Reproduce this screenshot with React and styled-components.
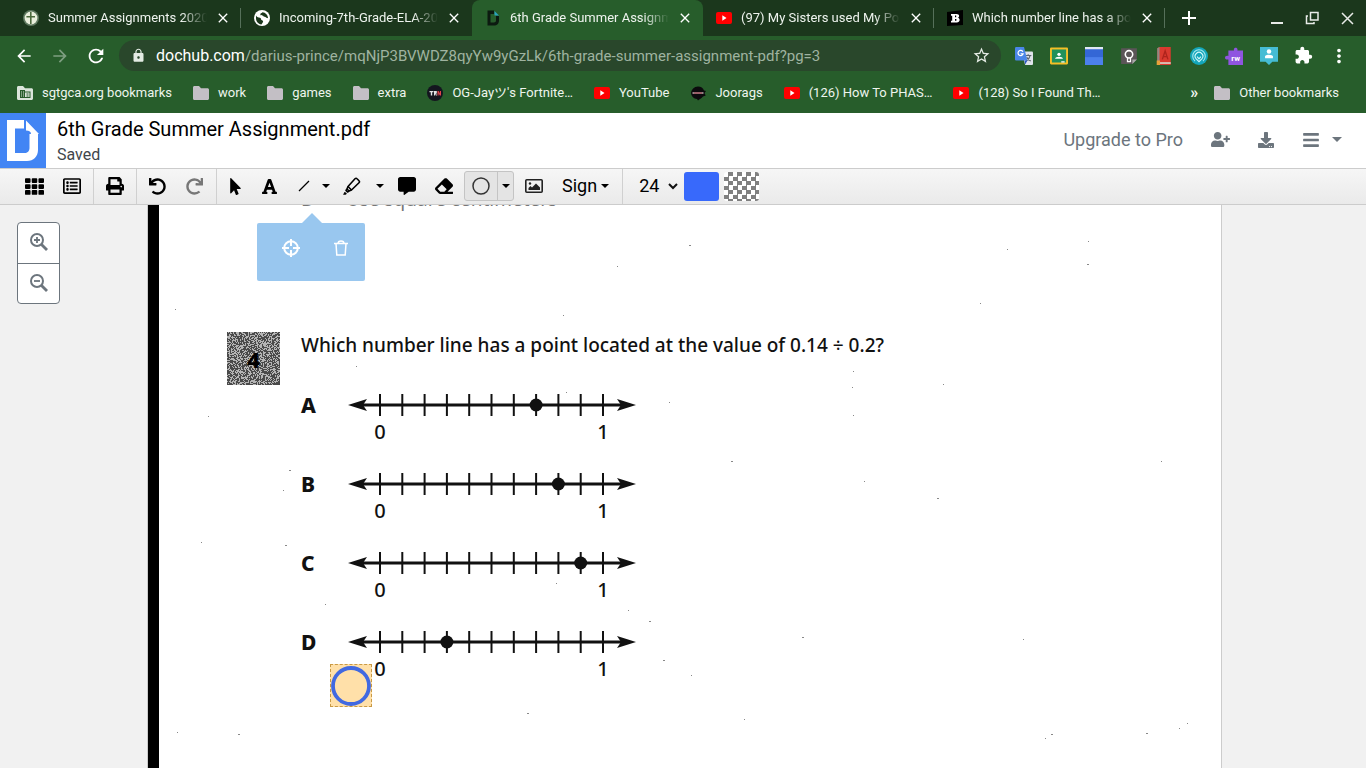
import React from 'react';
import styled, { createGlobalStyle } from 'styled-components';
import {
	FaBars,
	FaCommentAlt,
	FaDownload,
	FaEraser,
	FaFont,
	FaMousePointer,
	FaPrint,
	FaRedo,
	FaRegListAlt,
	FaTh,
	FaUndo,
	FaUserPlus,
} from 'react-icons/fa';
import {
	MdArrowBack,
	MdArrowForward,
	MdClose,
	MdExtension,
	MdLock,
	MdMoreVert,
	MdRefresh,
	MdStarBorder,
} from 'react-icons/md';

const tabs = [
	{ title: 'Summer Assignments 2020', icon: 'cross', divider: true },
	{ title: 'Incoming-7th-Grade-ELA-20', icon: 'globe' },
	{ title: '6th Grade Summer Assignm', icon: 'dochub', active: true },
	{ title: '(97) My Sisters used My Po', icon: 'youtube', divider: true },
	{ title: 'Which number line has a po', icon: 'brainly', divider: true },
];

const bookmarks = [
	{ title: 'sgtgca.org bookmarks', icon: 'managed' },
	{ title: 'work', icon: 'folder' },
	{ title: 'games', icon: 'folder' },
	{ title: 'extra', icon: 'folder' },
	{ title: "OG-Jayツ's Fortnite…", icon: 'trn' },
	{ title: 'YouTube', icon: 'youtube' },
	{ title: 'Joorags', icon: 'joorags' },
	{ title: '(126) How To PHAS…', icon: 'youtube' },
	{ title: '(128) So I Found Th…', icon: 'youtube' },
];

const extensions = [
	'translate',
	'classroom',
	'window',
	'bulb',
	'book',
	'rings',
	'rw',
	'person',
];

const answers = [
	{ letter: 'A', point: 7 },
	{ letter: 'B', point: 8 },
	{ letter: 'C', point: 9 },
	{ letter: 'D', point: 3 },
];

// dust left by the scanner, [x, y, size] from the page corner
const specks = [
	[541, 40, 2], [469, 61, 1], [939, 59, 2], [832, 98, 1], [859, 44, 1],
	[940, 36, 1], [1109, 45, 1], [27, 104, 1], [415, 110, 1], [795, 179, 1],
	[705, 166, 1], [704, 182, 1], [705, 210, 1], [521, 197, 1], [583, 256, 2],
	[716, 276, 1], [789, 293, 2], [1013, 256, 1], [141, 265, 2], [135, 285, 1],
	[53, 337, 1], [137, 340, 2], [177, 399, 1], [408, 378, 1], [480, 405, 1],
	[501, 416, 2], [654, 432, 2], [875, 434, 1], [515, 455, 2], [543, 470, 1],
	[379, 508, 2], [90, 529, 2], [29, 527, 1], [903, 529, 2], [897, 533, 1],
	[998, 528, 2], [1039, 518, 1], [1031, 523, 1], [596, 514, 1], [60, 211, 1],
	[208, 161, 1], [418, 187, 1],
];

function makeGrain(size) {
	let seed = 41;
	let d = '';
	for (let y = 0; y < size; y += 1) {
		for (let x = 0; x < size; x += 1) {
			seed = (seed * 1103515245 + 12345) % 2147483648;
			if (seed / 2147483648 < 0.56) d += `M${x} ${y}h1v1h-1z`;
		}
	}
	return d;
}

const grain = makeGrain(53);

function SiteIcon({ name, size = 16 }) {
	return (
		<svg width={size} height={size} viewBox="0 0 16 16" aria-hidden="true">
			{drawings[name]}
		</svg>
	);
}

const drawings = {
	cross: (
		<>
			<circle cx="8" cy="8" r="8" fill="#5f7a60" />
			<circle cx="8" cy="8" r="6.4" fill="#e9efdc" />
			<path d="M7 2h1.600v4H12v1.600H8.600V14H7V7.600H3.400V6H7z" fill="#4b6a3d" />
		</>
	),
	globe: (
		<>
			<circle cx="8" cy="8" r="8" fill="#fff" />
			<path
				d="M2 5.500c1.200 2 2.500 2 4 2.300 1.600.4.400 2 2 2.400 1.500.3 1.300 1.600.6 2.600l-1.200 1.600C4 14 1.800 11 2 8zM8.500 2.200c-1 1.200-2.300 1-2.200 2.200.2 1.300 2 .4 2.700 1.400.7 1.200 2.400.7 3.300 1.900l1.800.6C14 5 11.500 2.500 8.500 2.200z"
				fill="#1b371c"
			/>
		</>
	),
	dochub: (
		<>
			<path
				d="M2.500.5H9V4H5.500v8.500H9c1.200 0 2-.8 2-2V6h3v4.500c0 3-2 5-5 5H2.500z"
				fill="#0c1a10"
			/>
			<path d="M9.500 1l4.500 4.500H9.500z" fill="#2ba3bd" />
		</>
	),
	youtube: (
		<>
			<rect y="2" width="16" height="12" rx="2" fill="#f00" />
			<path d="M6.300 5.300v5.400L10.500 8z" fill="#fff" />
		</>
	),
	brainly: (
		<>
			<path d="M0 2l16-2v15L0 16z" fill="#000" />
			<path d="M4 4h5.500c3.300 0 3.300 3.200 1.300 3.800 2.700.6 2.500 4.700-1 4.700H4v-1.700h1.200V5.700H4zm4 1.600v1.600h1.200v-1.600zm0 3.300v1.900h1.400V8.900z" fill="#fff" fillRule="evenodd" />
		</>
	),
	folder: (
		<path d="M0 2.500C0 1.700.6 1 1.500 1H6l2 2.200h6.500c.8 0 1.500.6 1.500 1.500v8.800c0 .8-.7 1.500-1.500 1.500h-13C.6 15 0 14.300 0 13.500z" fill="#c3bfc5" />
	),
	managed: (
		<>
			<path d="M0 2.500C0 1.700.6 1 1.500 1H6l2 2.200h6.500c.8 0 1.500.6 1.500 1.500v8.800c0 .8-.7 1.500-1.500 1.500h-13C.6 15 0 14.300 0 13.500z" fill="#dbe5db" />
			<path d="M3 5h5v1.500h5.500V13H3z" fill="#275d2b" />
			<path d="M4 6.500h1v1H4zM6 6.500h1v1H6zM4 8.500h1v1H4zM6 8.500h1v1H6zM4 10.500h1v1H4zM6 10.500h1v1H6zM8 7.500h4.500V12H8z" fill="#dbe5db" />
			<path d="M9.500 8.500h2v1h-2zM9.500 10.500h2v1h-2z" fill="#275d2b" />
		</>
	),
	trn: (
		<>
			<circle cx="8" cy="8" r="8" fill="#14151f" />
			<path d="M2.500 6h4v1.300H5.200V10.500H3.800V7.300H2.500zM7 6h2.800v2.400H9l1 2.100H8.800L8 8.600v1.900H7z" fill="#e3e3e6" />
			<path d="M10.500 6h1.200l1.200 2.400V6H14v4.500h-1.200l-1.200-2.300v2.300h-1.100z" fill="#e0424b" />
		</>
	),
	joorags: (
		<>
			<path d="M1 8c.5-3.500 3-6.500 7-6.500 3 0 5 1.500 6 4L16 6l-1.500 2 1.200 2.500-2.700 1c-1.500 2-3.500 2.500-5 4l-1-1.500C4 13.500 1.500 12 1 8z" fill="#0b0a0d" />
			<path d="M2.500 7.200h11v1.600h-11z" fill="#b3a0a5" />
			<path d="M4 7.600h8v.8H4z" fill="#a2283b" />
		</>
	),
	translate: (
		<>
			<path d="M6 4h9a1 1 0 0 1 1 1v10a1 1 0 0 1-1 1H9z" fill="#dfe3ea" />
			<path d="M9 7.500h5.500M11.700 6.500v1M13.500 7.500c-.5 2.500-2 4-3.500 5M10.300 9c.8 1.500 2.200 2.800 3.700 3.500" stroke="#5c6570" strokeWidth="1" fill="none" />
			<path d="M1 0h7l3 12H1a1 1 0 0 1-1-1V1a1 1 0 0 1 1-1z" fill="#4a86e8" />
			<path d="M7 4.200A2.300 2.300 0 1 0 7.200 6H5" stroke="#fff" strokeWidth="1.100" fill="none" />
			<path d="M8.500 12h2.500l-2 3.500z" fill="#2a56c6" />
		</>
	),
	classroom: (
		<>
			<rect y="0.500" width="16" height="15" rx="1" fill="#f6bf26" />
			<rect x="1.700" y="2.200" width="12.600" height="11.600" fill="#21915a" />
			<circle cx="8" cy="6.500" r="1.500" fill="#fff" />
			<path d="M4.500 10.500c0-2.500 7-2.500 7 0z" fill="#fff" />
			<path d="M10 12.700h3v1.100h-3z" fill="#fff" />
		</>
	),
	window: (
		<>
			<rect width="16" height="16" rx="1" fill="#3467d6" />
			<path d="M0 0h16v2H0z" fill="#e1e7f5" />
			<path d="M0 9h16v7H0z" fill="#4c80ec" />
		</>
	),
	bulb: (
		<>
			<path d="M1 1h14v10l-4 4H1z" fill="#5b5558" />
			<path d="M15 11l-4 4v-4z" fill="#aaa" />
			<circle cx="8" cy="6.500" r="3.300" fill="none" stroke="#fff" strokeWidth="1.400" />
			<path d="M6.700 9.500v3.500h2.600V9.500" fill="none" stroke="#fff" strokeWidth="1.200" />
		</>
	),
	book: (
		<>
			<path d="M2 1l2-1h10v16H2z" fill="#d93a2f" />
			<path d="M2 1l2-1v13l-2 2z" fill="#8f8a84" />
			<path d="M4 13.500h10V15H4z" fill="#d8cfc5" />
			<path d="M1.500 12h3v4h-3z" fill="#e9a13a" />
			<path d="M6.500 11L9 3.500l2.500 7.500M7.500 8.500h3" stroke="#ae231c" strokeWidth="1.200" fill="none" />
		</>
	),
	rings: (
		<>
			<circle cx="8" cy="8" r="8" fill="#14a6ba" />
			<path d="M4.500 12.500a5.600 5.600 0 1 1 7 0" stroke="#a9eaf0" strokeWidth="0.900" fill="none" />
			<path d="M5.500 10.500a3.400 3.400 0 1 1 5 0L8 13z" stroke="#d5f7fa" strokeWidth="1" fill="none" />
			<path d="M6.300 8.500L8 10.500l1.700-2" stroke="#d5f7fa" strokeWidth="1" fill="none" />
		</>
	),
	rw: (
		<>
			<path d="M3 3h5c-1-3 4-3 3 0h5v13H3v-5c-4 1-4-4 0-3z" fill="#8f55e0" />
			<text x="9.500" y="12" textAnchor="middle" fontFamily="Roboto, sans-serif" fontSize="7" fontWeight="700" fill="#fff">
				rw
			</text>
		</>
	),
	person: (
		<>
			<path d="M0 0h16v13h-5l-3 3-3-3H0z" fill="#45bcd4" />
			<circle cx="8" cy="4" r="2" fill="#fff" />
			<path d="M4.500 10V8c1.500-1.600 5.500-1.600 7 0v2z" fill="#fff" />
		</>
	),
};

function BrowserTabs() {
	return (
		<TabStrip>
			{tabs.map((tab) => (
				<Tab key={tab.title} $active={tab.active} $divider={tab.divider}>
					<SiteIcon name={tab.icon} />
					<TabTitle>{tab.title}</TabTitle>
					<TabClose aria-label="Close tab">
						<MdClose size={16} />
					</TabClose>
				</Tab>
			))}
			<WindowButton aria-label="New tab">
				<svg width="14" height="14" viewBox="0 0 14 14">
					<path d="M7 0v14M0 7h14" stroke="currentColor" strokeWidth="2" />
				</svg>
			</WindowButton>
			<WindowButtons>
				<WindowButton aria-label="Minimize">
					<svg width="14" height="14" viewBox="0 0 14 14">
						<path d="M1 12h12" stroke="currentColor" strokeWidth="2" />
					</svg>
				</WindowButton>
				<WindowButton aria-label="Restore">
					<svg width="14" height="14" viewBox="0 0 14 14" fill="none" stroke="currentColor" strokeWidth="1.500">
						<path d="M5.500 1.500h7.500v7.500H5.500zM3 5H1.500v7.500h7.500V11" />
					</svg>
				</WindowButton>
				<WindowButton aria-label="Close">
					<svg width="14" height="14" viewBox="0 0 14 14">
						<path d="M2 2l11 11M13 2L2 13" stroke="currentColor" strokeWidth="1.500" />
					</svg>
				</WindowButton>
			</WindowButtons>
		</TabStrip>
	);
}

function AddressRow() {
	return (
		<AddressBar>
			<NavButton aria-label="Back">
				<MdArrowBack size={20} />
			</NavButton>
			<NavButton aria-label="Forward" $faded>
				<MdArrowForward size={20} />
			</NavButton>
			<NavButton aria-label="Reload">
				<MdRefresh size={22} />
			</NavButton>
			<Omnibox>
				<MdLock size={15} />
				<Url>
					<b>dochub.com</b>/darius-prince/mqNjP3BVWDZ8qyYw9yGzLk/6th-grade-summer-assignment-pdf?pg=3
				</Url>
				<StarButton aria-label="Bookmark this page">
					<MdStarBorder size={19} />
				</StarButton>
			</Omnibox>
			<Extensions>
				{extensions.map((name) => (
					<ExtensionButton key={name} aria-label={name}>
						<SiteIcon name={name} size={18} />
					</ExtensionButton>
				))}
				<ExtensionButton aria-label="Extensions">
					<MdExtension size={19} />
				</ExtensionButton>
				<ExtensionButton aria-label="Menu">
					<MdMoreVert size={22} />
				</ExtensionButton>
			</Extensions>
		</AddressBar>
	);
}

function Bookmarks() {
	return (
		<BookmarkBar>
			{bookmarks.map((item) => (
				<Bookmark key={item.title} href="#">
					<SiteIcon name={item.icon} />
					{item.title}
				</Bookmark>
			))}
			<OtherBookmarks>
				<MoreButton aria-label="More bookmarks">»</MoreButton>
				<Bookmark href="#">
					<SiteIcon name="folder" />
					Other bookmarks
				</Bookmark>
			</OtherBookmarks>
		</BookmarkBar>
	);
}

function DocHeader() {
	return (
		<Header>
			<Logo href="#" aria-label="DocHub">
				<svg width="46" height="55" viewBox="0 0 46 55">
					<path d="M7 7h17v8.500H15V40h9.500c3 0 5-2 5-5V21H38v16c0 6.500-4.500 11-11 11H7z" fill="#fff" />
					<path d="M26 7.500l13 13.500h-8c0-2-1.500-3.500-5-3.500z" fill="#fff" />
				</svg>
			</Logo>
			<TitleBlock>
				<DocTitle>6th Grade Summer Assignment.pdf</DocTitle>
				<DocStatus>Saved</DocStatus>
			</TitleBlock>
			<HeaderActions>
				<UpgradeLink href="#">Upgrade to Pro</UpgradeLink>
				<HeaderButton aria-label="Share">
					<FaUserPlus size={19} />
				</HeaderButton>
				<HeaderButton aria-label="Download">
					<FaDownload size={16} />
				</HeaderButton>
				<HeaderButton aria-label="Menu">
					<FaBars size={18} />
					<Caret $size={5} />
				</HeaderButton>
			</HeaderActions>
		</Header>
	);
}

function EditorToolbar() {
	return (
		<Toolbar>
			<ToolGroup>
				<Tool aria-label="Thumbnails">
					<FaTh size={19} />
				</Tool>
				<Tool aria-label="Outline">
					<FaRegListAlt size={18} />
				</Tool>
			</ToolGroup>
			<ToolGroup>
				<Tool aria-label="Print">
					<FaPrint size={18} />
				</Tool>
			</ToolGroup>
			<ToolGroup>
				<Tool aria-label="Undo">
					<FaUndo size={17} />
				</Tool>
				<Tool aria-label="Redo" $dim>
					<FaRedo size={17} />
				</Tool>
			</ToolGroup>
			<ToolGroup>
				<Tool aria-label="Pointer" $width={32}>
					<FaMousePointer size={17} />
				</Tool>
				<Tool aria-label="Text">
					<FaFont size={17} />
				</Tool>
				<Tool aria-label="Line" $width={32}>
					<svg width="12" height="12" viewBox="0 0 12 12">
						<path d="M1 11L11 1" stroke="currentColor" strokeWidth="1.300" />
					</svg>
				</Tool>
				<Tool aria-label="Line options" $width={12}>
					<Caret $size={4} />
				</Tool>
				<Tool aria-label="Highlight" $width={40}>
					<svg width="18" height="18" viewBox="0 0 18 18" fill="none" stroke="currentColor" strokeWidth="1.600" strokeLinejoin="round">
						<path d="M5 9.500L12 1.800c.7-.7 1.400-.7 2 0l2 2c.7.600.700 1.300 0 2L8.500 13z" />
						<path d="M5 9.500L4 12l2 2 2.500-1" />
						<path d="M4 12l-1 1.500L4.500 15 6 14" />
						<path d="M1.800 15l1.800 1.800-1 .700H.500z" fill="currentColor" strokeWidth="0.500" />
					</svg>
				</Tool>
				<Tool aria-label="Highlight options" $width={16}>
					<Caret $size={4} />
				</Tool>
				<Tool aria-label="Comment">
					<FaCommentAlt size={18} />
				</Tool>
				<Tool aria-label="Whiteout">
					<FaEraser size={18} />
				</Tool>
				<SplitButton>
					<Tool aria-label="Circle" $width={32}>
						<svg width="18" height="18" viewBox="0 0 18 18">
							<circle cx="9" cy="9" r="8" fill="none" stroke="#333" strokeWidth="1.500" />
						</svg>
					</Tool>
					<Tool aria-label="Shape options" $width={16}>
						<Caret $size={4} />
					</Tool>
				</SplitButton>
				<Tool aria-label="Image" $width={40}>
					<svg width="18" height="14" viewBox="0 0 18 14">
						<rect x="0.800" y="0.800" width="16.400" height="12.400" rx="1" fill="none" stroke="#222" strokeWidth="1.600" />
						<circle cx="5" cy="4.500" r="1.200" fill="#222" />
						<path d="M3.500 11V9l2-2 1.500 1.500L11 4.500l4 4V11z" fill="#222" />
					</svg>
				</Tool>
				<SignButton>
					Sign
					<Caret $size={4} />
				</SignButton>
			</ToolGroup>
			<StyleGroup>
				<SizePicker>
					<SizeSelect aria-label="Size" defaultValue="24">
						<option>24</option>
					</SizeSelect>
					<svg width="10" height="7" viewBox="0 0 10 7">
						<path d="M1 1l4 4 4-4" fill="none" stroke="#111" strokeWidth="2" />
					</svg>
				</SizePicker>
				<Swatch aria-label="Stroke colour" $color="#3869fb" />
				<ClearSwatch aria-label="Fill colour" />
			</StyleGroup>
		</Toolbar>
	);
}

function ZoomIcon({ plus }) {
	return (
		<svg width="18" height="18" viewBox="0 0 18 18" fill="none" stroke="currentColor">
			<circle cx="7" cy="7" r="6" strokeWidth="2" />
			<path d="M11.500 11.500L17 17" strokeWidth="2.800" />
			<path d={plus ? 'M4 7h6M7 4v6' : 'M4 7h6'} strokeWidth="1.800" />
		</svg>
	);
}

function NumberLine({ letter, point }) {
	const at = (n) => 33 + n * 22.3;

	return (
		<Answer>
			<AnswerLetter>{letter}</AnswerLetter>
			<svg width="290" height="50" viewBox="0 0 290 50" role="img" aria-label={`Number line ${letter}`}>
				<path d="M8 13H282" stroke="#111" strokeWidth="2.800" />
				<path d="M1 13l19-6-4 6 4 6zM289 13l-19-6 4 6-4 6z" fill="#111" />
				{Array.from({ length: 11 }, (_, n) => (
					<path key={n} d={`M${at(n)} 2v22`} stroke="#111" strokeWidth="2" />
				))}
				<circle cx={at(point)} cy="13" r="6.500" fill="#111" />
				<LineLabel x={at(0)} y="47">
					0
				</LineLabel>
				<LineLabel x={at(10)} y="47">
					1
				</LineLabel>
			</svg>
		</Answer>
	);
}

function Paper() {
	return (
		<Sheet>
			<ScanEdge />
			<SheetBody>
				<PreviousAnswer>
					<span>D</span>
					<span>Use square centimeters</span>
				</PreviousAnswer>
				<Question>
					<QuestionBadge>
						<svg width="53" height="53" viewBox="0 0 53 53" shapeRendering="crispEdges" aria-hidden="true">
							<path d="M0 0h53v53H0z" fill="#b4b4b4" />
							<path d={grain} fill="#4a4a4a" />
						</svg>
						<span>4</span>
					</QuestionBadge>
					<div>
						<QuestionText>Which number line has a point located at the value of 0.14 ÷ 0.2?</QuestionText>
						{answers.map((answer) => (
							<NumberLine key={answer.letter} {...answer} />
						))}
					</div>
				</Question>
			</SheetBody>
			<Specks aria-hidden="true">
				{specks.map(([x, y, size]) => (
					<rect key={`${x}-${y}`} x={x} y={y} width={size} height="1" fill="#888" />
				))}
			</Specks>
			<ShapeMenu>
				<MenuButton aria-label="Position">
					<svg width="18" height="18" viewBox="0 0 18 18" fill="none" stroke="#fff" strokeWidth="2">
						<circle cx="9" cy="9" r="6.800" />
						<path d="M9 0v7M9 11v7M0 9h7M11 9h7" />
					</svg>
				</MenuButton>
				<MenuButton aria-label="Delete">
					<svg width="14" height="16" viewBox="0 0 14 16" fill="none" stroke="#fff" strokeWidth="1.500">
						<path d="M0 3.500h14M4 3.500c0-3.500 6-3.500 6 0M2 3.500l.8 11.500h8.400L12 3.500" />
					</svg>
				</MenuButton>
			</ShapeMenu>
			<DrawnShape>
				<svg width="40" height="41" viewBox="0 0 40 41">
					<circle cx="20" cy="21" r="18" fill="none" stroke="#4169e1" strokeWidth="3.800" />
				</svg>
			</DrawnShape>
		</Sheet>
	);
}

function App() {
	return (
		<Page>
			<GlobalStyle />
			<BrowserTabs />
			<AddressRow />
			<Bookmarks />
			<DocHeader />
			<EditorToolbar />
			<Workspace>
				<ZoomControls>
					<ZoomButton aria-label="Zoom in">
						<ZoomIcon plus />
					</ZoomButton>
					<ZoomButton aria-label="Zoom out">
						<ZoomIcon />
					</ZoomButton>
				</ZoomControls>
				<Paper />
			</Workspace>
		</Page>
	);
}

export default App;

const GlobalStyle = createGlobalStyle`
	* {
		box-sizing: border-box;
	}

	body {
		margin: 0;
		font-family: Roboto, "Noto Sans CJK JP", sans-serif;
	}

	button {
		border: 0;
		padding: 0;
		background: none;
		color: inherit;
		font: inherit;
		cursor: pointer;
	}

	a {
		color: inherit;
		text-decoration: none;
	}

	svg {
		display: block;
		flex-shrink: 0;
	}
`;

const Page = styled.div`
	height: 100vh;
	display: flex;
	flex-direction: column;
	overflow: hidden;
	background: #f1f1f1;
`;

const TabStrip = styled.div`
	display: flex;
	align-items: center;
	height: 36px;
	flex-shrink: 0;
	padding-left: 10px;
	background: #1b371c;
	color: #fff;
`;

const Tab = styled.div`
	position: relative;
	flex: 0 1 231px;
	min-width: 0;
	height: 36px;
	display: flex;
	align-items: center;
	padding: 0 10px 0 13px;
	border-radius: 8px 8px 0 0;
	background: ${(props) => (props.$active ? '#275d2b' : 'transparent')};

	&::after {
		content: '';
		position: absolute;
		right: 0;
		top: 8px;
		height: 20px;
		border-right: ${(props) => (props.$divider ? '1px solid #56705a' : '0')};
	}
`;

const TabTitle = styled.span`
	flex: 1;
	min-width: 0;
	margin: 0 8px 0 9px;
	font-size: 13px;
	line-height: 20px;
	color: #eef3ee;
	white-space: nowrap;
	overflow: hidden;
	mask-image: linear-gradient(90deg, #000 84%, transparent);
`;

const TabClose = styled.button`
	width: 16px;
	display: flex;
	justify-content: center;
`;

const WindowButton = styled.button`
	width: 35px;
	height: 36px;
	display: flex;
	align-items: center;
	justify-content: center;
	margin-left: 6px;
`;

const WindowButtons = styled.div`
	display: flex;
	margin-left: auto;
	padding-right: 2px;

	${WindowButton} {
		margin-left: 0;
		opacity: 0.9;
	}
`;

const AddressBar = styled.div`
	display: flex;
	align-items: center;
	height: 39px;
	flex-shrink: 0;
	padding-left: 6px;
	background: #275d2b;
	color: #fff;
`;

const NavButton = styled.button`
	width: 36px;
	height: 32px;
	display: flex;
	align-items: center;
	justify-content: center;
	opacity: ${(props) => (props.$faded ? 0.4 : 1)};
`;

const Omnibox = styled.div`
	flex: 1;
	min-width: 0;
	height: 31px;
	display: flex;
	align-items: center;
	gap: 10px;
	margin: 0 5px;
	padding: 0 10px 0 12px;
	border-radius: 16px;
	background: #29472b;
	color: #e4ebe4;
`;

const Url = styled.span`
	flex: 1;
	min-width: 0;
	overflow: hidden;
	white-space: nowrap;
	font-size: 15px;
	line-height: 20px;
	color: #9fb3a0;

	b {
		font-size: 16px;
		font-weight: 400;
		color: #fff;
	}
`;

const StarButton = styled.button`
	display: flex;
`;

const Extensions = styled.div`
	display: flex;
	padding-right: 10px;
`;

const ExtensionButton = styled.button`
	width: 35px;
	height: 32px;
	display: flex;
	align-items: center;
	justify-content: center;
`;

const BookmarkBar = styled.nav`
	display: flex;
	align-items: center;
	gap: 21px;
	height: 38px;
	flex-shrink: 0;
	padding: 0 27px 2px 17px;
	background: #275d2b;
	color: #eef5ee;
	font-size: 13px;
	line-height: 20px;
`;

const Bookmark = styled.a`
	display: flex;
	align-items: center;
	gap: 9px;
	white-space: nowrap;
`;

const OtherBookmarks = styled.div`
	display: flex;
	align-items: center;
	gap: 16px;
	margin-left: auto;
`;

const MoreButton = styled.button`
	font-size: 16px;
	line-height: 20px;
	font-weight: 700;
`;

const Header = styled.header`
	display: flex;
	height: 55px;
	flex-shrink: 0;
	background: #fff;
`;

const Logo = styled.a`
	width: 46px;
	background: #4285f4;
`;

const TitleBlock = styled.div`
	padding: 3px 0 0 11px;
`;

const DocTitle = styled.h1`
	margin: 0 0 1px;
	font-size: 20px;
	line-height: 26px;
	font-weight: 400;
	color: #000;
`;

const DocStatus = styled.div`
	font-size: 16px;
	line-height: 24px;
	color: #41464b;
`;

const HeaderActions = styled.div`
	display: flex;
	align-items: center;
	gap: 28px;
	margin-left: auto;
	padding: 0 24px 2px 0;
	color: #6c757d;
`;

const UpgradeLink = styled.a`
	font-size: 18px;
	line-height: 24px;
`;

const HeaderButton = styled.button`
	display: flex;
	align-items: center;
	gap: 12px;
`;

const Caret = styled.span`
	border: ${(props) => props.$size}px solid transparent;
	border-top-color: currentColor;
	border-bottom: 0;
`;

const Toolbar = styled.div`
	display: flex;
	height: 37px;
	flex-shrink: 0;
	padding-left: 14px;
	border-top: 1px solid #ccc;
	border-bottom: 1px solid #ccc;
	background: linear-gradient(#f6f6f6, #eaeaea);
	color: #000;
`;

const ToolGroup = styled.div`
	display: flex;
	align-items: center;
	padding: 0 3px 1px 2px;
	border-right: 1px solid #d0d0d0;
`;

const Tool = styled.button`
	width: ${(props) => props.$width || 37}px;
	height: 28px;
	display: flex;
	align-items: center;
	justify-content: center;
	color: ${(props) => (props.$dim ? '#777' : '#000')};
`;

const SplitButton = styled.div`
	display: flex;
	margin-left: 2px;
	border: 1px solid #c4c4c4;
	border-radius: 3px;
	background: #e4e4e4;

	${Tool} + ${Tool} {
		border-left: 1px solid #c4c4c4;
	}
`;

const SignButton = styled.button`
	display: flex;
	align-items: center;
	gap: 4px;
	padding: 0 10px 0 8px;
	font-size: 18px;
	line-height: 24px;
`;

const StyleGroup = styled.div`
	display: flex;
	align-items: center;
	gap: 5px;
	padding: 0 0 1px 16px;
`;

const SizePicker = styled.label`
	display: flex;
	align-items: center;
	gap: 8px;
	margin-right: 1px;
`;

const SizeSelect = styled.select`
	appearance: none;
	border: 0;
	padding: 0;
	background: none;
	font-family: Roboto, sans-serif;
	font-size: 18px;
	line-height: 24px;
	color: #000;
`;

const Swatch = styled.button`
	width: 35px;
	height: 29px;
	border-radius: 3px;
	background: ${(props) => props.$color};
`;

const ClearSwatch = styled(Swatch)`
	background: repeating-conic-gradient(#808080 0 25%, #fff 0 50%) 0 0 / 9px 9px;
`;

const Workspace = styled.main`
	flex: 1;
	min-height: 0;
	display: grid;
	grid-template-columns: 147px 1fr 144px;
	overflow: hidden;
	background: #f1f1f1;
`;

const ZoomControls = styled.div`
	align-self: start;
	justify-self: start;
	margin: 17px 0 0 17px;
	border: 1px solid #6c757d;
	border-radius: 4px;
	background: #fff;
`;

const ZoomButton = styled.button`
	width: 41px;
	height: 40px;
	display: flex;
	align-items: center;
	justify-content: center;
	padding-bottom: 2px;
	color: #6c757d;

	& + & {
		border-top: 1px solid #6c757d;
	}
`;

const Sheet = styled.article`
	position: relative;
	display: flex;
	border-left: 1px solid #ccc;
	border-right: 1px solid #ccc;
	background: #fff;
	color: #111;
	font-family: 'Noto Sans', 'Open Sans', sans-serif;
	overflow: hidden;
`;

const ScanEdge = styled.div`
	width: 11px;
	flex-shrink: 0;
	background: #000;
`;

const SheetBody = styled.div`
	flex: 1;
	min-width: 0;
	padding-left: 68px;
`;

const PreviousAnswer = styled.div`
	display: flex;
	gap: 31px;
	margin-top: -18px;
	padding-left: 74px;
	font-size: 19px;
	line-height: 24px;
	color: #777;
`;

const Question = styled.section`
	display: flex;
	gap: 21px;
	padding-top: 121px;
`;

const QuestionBadge = styled.div`
	display: grid;
	place-items: center;
	align-self: start;
	width: 53px;

	> * {
		grid-area: 1 / 1;
	}

	span {
		font-size: 22px;
		line-height: 28px;
		font-weight: 800;
		color: #000;
	}
`;

const QuestionText = styled.p`
	margin: 0 0 34px;
	font-size: 19px;
	line-height: 26px;
	font-weight: 500;
	white-space: nowrap;
`;

const Answer = styled.div`
	display: flex;
	height: 79px;
`;

const AnswerLetter = styled.span`
	width: 46px;
	font-size: 21px;
	line-height: 26px;
	font-weight: 800;
`;

const LineLabel = styled.text`
	font-size: 20px;
	font-weight: 500;
	text-anchor: middle;
	fill: #111;
`;

const Specks = styled.svg`
	position: absolute;
	inset: 0;
	width: 100%;
	height: 100%;
	pointer-events: none;
`;

const ShapeMenu = styled.div`
	position: absolute;
	left: 109px;
	top: 18px;
	width: 108px;
	height: 58px;
	display: flex;
	justify-content: space-around;
	padding: 0 0 8px 8px;
	border-radius: 2px;
	background: #99c7ef;

	&::before {
		content: '';
		position: absolute;
		left: 45px;
		bottom: 100%;
		border: 10px solid transparent;
		border-top: 0;
		border-bottom-color: #99c7ef;
	}
`;

const MenuButton = styled.button`
	display: flex;
	align-items: center;
`;

const DrawnShape = styled.div`
	position: absolute;
	left: 182px;
	top: 459px;
	border: 1px dashed #c99a45;
	background: rgba(255, 213, 140, 0.75);
`;
